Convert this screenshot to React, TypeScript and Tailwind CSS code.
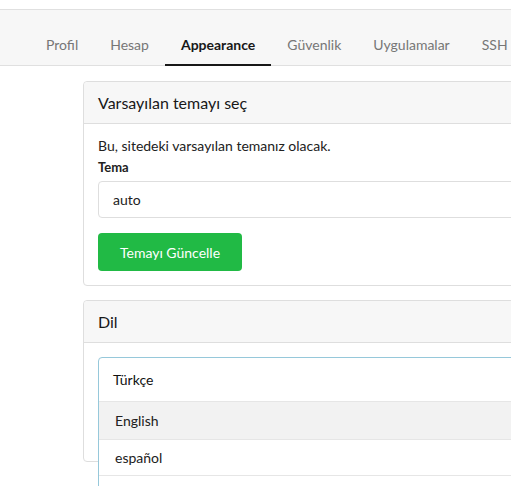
import React from "react";

const tabs = ["Profil", "Hesap", "Appearance", "Güvenlik", "Uygulamalar", "SSH"];

export default function App() {
  return (
    <div className="w-[511px] h-[486px] overflow-hidden bg-white text-[#212121] font-['Lato','Noto_Sans',sans-serif]">
      <div className="w-[700px]">
        <div className="h-[9px]" />
        <div className="border-t border-b border-[#e0e0e0] bg-[#f7f7f7] h-[57px] flex items-end pl-[30px]">
          {tabs.map((t) => {
            const active = t === "Appearance";
            return (
              <div
                key={t}
                className={
                  active
                    ? "h-[42px] -mb-px px-4 flex items-center border-b-2 border-[#181818] text-[14px] font-bold text-[#181818]"
                    : "h-[42px] -mb-px px-4 flex items-center border-b-2 border-transparent text-[14px] text-[#767676]"
                }
              >
                {t}
              </div>
            );
          })}
        </div>

        <div className="ml-[83px] mt-[15px] w-[560px]">
          <div className="border border-[#dedede] rounded-[4px]">
            <div className="h-[42px] bg-[#f7f7f7] border-b border-[#dedede] px-[14px] flex items-center text-[16px] text-[#181818] rounded-t-[4px]">
              Varsayılan temayı seç
            </div>
            <div className="pt-[12px] px-[14px] pb-[14px]">
              <p className="text-[14px] leading-[20px]">Bu, sitedeki varsayılan temanız olacak.</p>
              <div className="text-[13px] font-bold leading-[20px] mt-[1px]">Tema</div>
              <div className="mt-[4px] h-[37px] border border-[#dedede] rounded-[4px] flex items-center px-[14px] text-[14px]">
                auto
              </div>
              <button className="mt-[15px] h-[38px] w-[144px] bg-[#21ba45] text-white text-[14px] rounded-[4px] flex items-center justify-center">
                Temayı Güncelle
              </button>
            </div>
          </div>

          <div className="mt-[14px] border border-[#dedede] rounded-[4px] relative">
            <div className="h-[42px] bg-[#f7f7f7] border-b border-[#dedede] px-[14px] flex items-center text-[16px] text-[#181818] rounded-t-[4px]">
              Dil
            </div>
            <div className="h-[118px]" />
            <div className="absolute left-[14px] top-[56px] w-[560px] bg-white border border-[#96c8da] rounded-t-[4px] text-[14px]">
              <div className="h-[43px] flex items-center px-[14px] text-[#111]">Türkçe</div>
              <div className="h-[38px] border-t border-[#e6e6e6] bg-[#f2f2f2] flex items-center px-[16px]">English</div>
              <div className="h-[36px] border-t border-[#e6e6e6] flex items-center px-[16px]">español</div>
              <div className="h-[38px] border-t border-[#e6e6e6]" />
            </div>
          </div>
        </div>
      </div>
    </div>
  );
}
